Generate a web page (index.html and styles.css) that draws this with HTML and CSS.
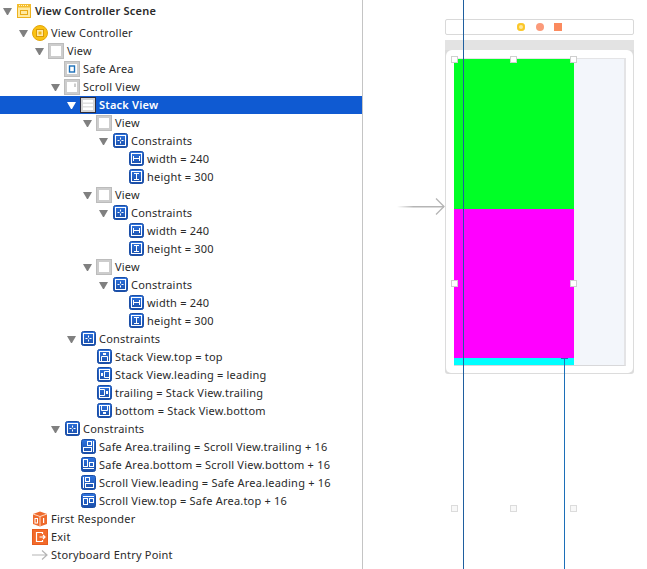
FILE: index.html
```html
<!DOCTYPE html>
<html lang="en">

<head>
    <meta charset="UTF-8" />
    <title>Main.storyboard</title>
    <link rel="stylesheet" href="styles.css">
</head>

<body>
    <svg class="defs" width="0" height="0">
        <defs>
            <linearGradient id="blue" x1="0" y1="0" x2="0" y2="1">
                <stop offset="0" stop-color="#2f74e0" />
                <stop offset="1" stop-color="#1a4ea8" />
            </linearGradient>
            <symbol id="i-scene" viewBox="0 0 16 16">
                <rect x="1.500" y="1.500" width="13" height="13" fill="#ffe9a0" stroke="#eeb21c" />
                <rect x="1" y="1" width="14" height="3.500" fill="#f4bd2e" />
                <path d="M3 2.500h10" stroke="#fff3c8" stroke-dasharray="1 1" />
                <rect x="4.500" y="7.500" width="7" height="4" fill="none" stroke="#e8a915" />
            </symbol>
            <symbol id="i-vc" viewBox="0 0 16 16">
                <circle cx="8" cy="8" r="7.500" fill="#fac213" stroke="#e2a50c" />
                <rect x="4.500" y="4.500" width="7" height="7" fill="#ffe9a8" stroke="#d99a08" />
                <rect x="6.500" y="6.500" width="3" height="3" fill="#f5b90f" />
            </symbol>
            <symbol id="i-view" viewBox="0 0 16 16">
                <rect x=".5" y=".5" width="15" height="15" fill="#cdcdcd" stroke="#bcbcbc" />
                <rect x="3" y="3" width="10" height="10" fill="#fff" />
            </symbol>
            <symbol id="i-safe" viewBox="0 0 16 16">
                <rect x=".5" y=".5" width="15" height="15" fill="#cdcdcd" stroke="#bcbcbc" />
                <rect x="3" y="3" width="10" height="10" fill="#fff" />
                <rect x="5.500" y="5" width="5" height="6" fill="#fff" stroke="#1c6fb8" stroke-width="1.400" />
            </symbol>
            <symbol id="i-scroll" viewBox="0 0 16 16">
                <rect x=".5" y=".5" width="15" height="15" fill="#cdcdcd" stroke="#bcbcbc" />
                <rect x="3" y="3" width="10" height="10" fill="#fff" />
                <rect x="10.500" y="4.500" width="1" height="3.500" fill="#9a9a9a" />
            </symbol>
            <symbol id="i-stack" viewBox="0 0 16 16">
                <rect x=".5" y=".5" width="15" height="15" fill="#d4d4d4" stroke="#2c2c3c" />
                <rect x="3" y="3" width="10" height="2.600" fill="#fff" />
                <rect x="3" y="6.700" width="10" height="2.600" fill="#fff" />
                <rect x="3" y="10.400" width="10" height="2.600" fill="#fff" />
            </symbol>

            <!-- blue constraint icons: 15px tile, pushed 1px right by the viewBox -->
            <symbol id="i-group" viewBox="-1 0 16 16">
                <rect x=".5" y=".5" width="14" height="14" rx="2" fill="url(#blue)" stroke="#1b4ea6" />
                <rect x="2.500" y="2.500" width="10" height="10" fill="none" stroke="#fff" />
                <path d="M7.500 4.500v2M7.500 8.500v2M4.500 7.500h2M8.500 7.500h2" stroke="#fff" />
            </symbol>
            <symbol id="i-width" viewBox="-1 0 16 16">
                <rect x=".5" y=".5" width="14" height="14" rx="2" fill="url(#blue)" stroke="#1b4ea6" />
                <rect x="2.500" y="2.500" width="10" height="10" fill="none" stroke="#fff" />
                <path d="M4.500 5v5M10.500 5v5M4.500 7.500h6" stroke="#fff" />
            </symbol>
            <symbol id="i-height" viewBox="-1 0 16 16">
                <rect x=".5" y=".5" width="14" height="14" rx="2" fill="url(#blue)" stroke="#1b4ea6" />
                <rect x="2.500" y="2.500" width="10" height="10" fill="none" stroke="#fff" />
                <path d="M5 4.500h5M5 10.500h5M7.500 4.500v6" stroke="#fff" />
            </symbol>
            <symbol id="i-top" viewBox="-1 0 16 16">
                <rect x=".5" y=".5" width="14" height="14" rx="2" fill="url(#blue)" stroke="#1b4ea6" />
                <rect x="2.500" y="2.500" width="10" height="10" fill="none" stroke="#fff" />
                <rect x="6" y="4" width="3" height="2" fill="#fff" />
                <path d="M4.500 12V7.500h6V12" fill="none" stroke="#fff" />
            </symbol>
            <symbol id="i-leading" viewBox="-1 0 16 16">
                <rect x=".5" y=".5" width="14" height="14" rx="2" fill="url(#blue)" stroke="#1b4ea6" />
                <rect x="2.500" y="2.500" width="10" height="10" fill="none" stroke="#fff" />
                <rect x="4" y="6" width="2" height="3" fill="#fff" />
                <path d="M12 4.500H7.500v6H12" fill="none" stroke="#fff" />
            </symbol>
            <symbol id="i-trailing" viewBox="-1 0 16 16">
                <rect x=".5" y=".5" width="14" height="14" rx="2" fill="url(#blue)" stroke="#1b4ea6" />
                <rect x="2.500" y="2.500" width="10" height="10" fill="none" stroke="#fff" />
                <rect x="9" y="6" width="2" height="3" fill="#fff" />
                <path d="M3 4.500h4.500v6H3" fill="none" stroke="#fff" />
            </symbol>
            <symbol id="i-bottom" viewBox="-1 0 16 16">
                <rect x=".5" y=".5" width="14" height="14" rx="2" fill="url(#blue)" stroke="#1b4ea6" />
                <rect x="2.500" y="2.500" width="10" height="10" fill="none" stroke="#fff" />
                <rect x="6" y="9" width="3" height="2" fill="#fff" />
                <path d="M4.500 3v4.500h6V3" fill="none" stroke="#fff" />
            </symbol>
            <symbol id="i-safe-trailing" viewBox="-1 0 16 16">
                <rect x=".5" y=".5" width="14" height="14" rx="2" fill="url(#blue)" stroke="#1b4ea6" />
                <path d="M12.500 2v11" stroke="#fff" />
                <rect x="6.500" y="2.500" width="4" height="4" fill="none" stroke="#fff" />
                <rect x="2.500" y="8.500" width="8" height="4" fill="none" stroke="#fff" />
            </symbol>
            <symbol id="i-safe-bottom" viewBox="-1 0 16 16">
                <rect x=".5" y=".5" width="14" height="14" rx="2" fill="url(#blue)" stroke="#1b4ea6" />
                <rect x="2.500" y="2.500" width="4" height="7" fill="none" stroke="#fff" />
                <rect x="8.500" y="5.500" width="4" height="4" fill="none" stroke="#fff" />
                <path d="M2 11.500h11" stroke="#fff" />
            </symbol>
            <symbol id="i-scroll-leading" viewBox="-1 0 16 16">
                <rect x=".5" y=".5" width="14" height="14" rx="2" fill="url(#blue)" stroke="#1b4ea6" />
                <path d="M2.500 2v11" stroke="#fff" />
                <rect x="4.500" y="2.500" width="4" height="4" fill="none" stroke="#fff" />
                <rect x="4.500" y="8.500" width="8" height="4" fill="none" stroke="#fff" />
            </symbol>
            <symbol id="i-scroll-top" viewBox="-1 0 16 16">
                <rect x=".5" y=".5" width="14" height="14" rx="2" fill="url(#blue)" stroke="#1b4ea6" />
                <path d="M2 3.500h11" stroke="#fff" />
                <rect x="2.500" y="5.500" width="4" height="6" fill="none" stroke="#fff" />
                <rect x="8.500" y="5.500" width="4" height="4" fill="none" stroke="#fff" />
            </symbol>

            <symbol id="i-responder" viewBox="0 0 16 16">
                <path d="M8 .5l7 2.500v10l-7 2.500-7-2.500V3z" fill="#ee6a2c" />
                <path d="M1 3l7 2.500L15 3M8 5.500v10" fill="none" stroke="#ffd9c2" />
                <rect x="3" y="7.500" width="2.500" height="4.500" fill="none" stroke="#fff" />
                <rect x="11" y="7" width="1.200" height="5" fill="#fff" />
            </symbol>
            <symbol id="i-exit" viewBox="0 0 16 16">
                <rect x=".5" y=".5" width="15" height="15" fill="#f26a2a" stroke="#e65c1e" />
                <path d="M10.500 5V3.500h-6v9h6V11M7.500 8h5.500M11 6l2 2-2 2" fill="none" stroke="#fff" stroke-width="1.200" />
            </symbol>
            <symbol id="i-entry" viewBox="0 0 16 16">
                <path d="M0 8h15M10 3.500l5 4.500-5 4.500" fill="none" stroke="#b5b5b5" stroke-width="1.200" />
            </symbol>
        </defs>
    </svg>

    <div class="editor">
        <ul class="tree">
            <li class="row scene d0"><i class="tri"></i><svg class="ico"><use href="#i-scene" /></svg><b>View Controller Scene</b></li>
            <li class="row d1 gap"><i class="tri"></i><svg class="ico"><use href="#i-vc" /></svg>View Controller</li>
            <li class="row d2"><i class="tri"></i><svg class="ico"><use href="#i-view" /></svg>View</li>
            <li class="row d3"><i class="tri none"></i><svg class="ico"><use href="#i-safe" /></svg>Safe Area</li>
            <li class="row d3"><i class="tri"></i><svg class="ico"><use href="#i-scroll" /></svg>Scroll View</li>
            <li class="row d4 selected"><i class="tri"></i><svg class="ico"><use href="#i-stack" /></svg><b>Stack View</b></li>
            <li class="row d5"><i class="tri"></i><svg class="ico"><use href="#i-view" /></svg>View</li>
            <li class="row d6"><i class="tri"></i><svg class="ico"><use href="#i-group" /></svg>Constraints</li>
            <li class="row d7"><i class="tri none"></i><svg class="ico"><use href="#i-width" /></svg>width = 240</li>
            <li class="row d7"><i class="tri none"></i><svg class="ico"><use href="#i-height" /></svg>height = 300</li>
            <li class="row d5"><i class="tri"></i><svg class="ico"><use href="#i-view" /></svg>View</li>
            <li class="row d6"><i class="tri"></i><svg class="ico"><use href="#i-group" /></svg>Constraints</li>
            <li class="row d7"><i class="tri none"></i><svg class="ico"><use href="#i-width" /></svg>width = 240</li>
            <li class="row d7"><i class="tri none"></i><svg class="ico"><use href="#i-height" /></svg>height = 300</li>
            <li class="row d5"><i class="tri"></i><svg class="ico"><use href="#i-view" /></svg>View</li>
            <li class="row d6"><i class="tri"></i><svg class="ico"><use href="#i-group" /></svg>Constraints</li>
            <li class="row d7"><i class="tri none"></i><svg class="ico"><use href="#i-width" /></svg>width = 240</li>
            <li class="row d7"><i class="tri none"></i><svg class="ico"><use href="#i-height" /></svg>height = 300</li>
            <li class="row d4"><i class="tri"></i><svg class="ico"><use href="#i-group" /></svg>Constraints</li>
            <li class="row d5"><i class="tri none"></i><svg class="ico"><use href="#i-top" /></svg>Stack View.top = top</li>
            <li class="row d5"><i class="tri none"></i><svg class="ico"><use href="#i-leading" /></svg>Stack View.leading = leading</li>
            <li class="row d5"><i class="tri none"></i><svg class="ico"><use href="#i-trailing" /></svg>trailing = Stack View.trailing</li>
            <li class="row d5"><i class="tri none"></i><svg class="ico"><use href="#i-bottom" /></svg>bottom = Stack View.bottom</li>
            <li class="row d3"><i class="tri"></i><svg class="ico"><use href="#i-group" /></svg>Constraints</li>
            <li class="row d4"><i class="tri none"></i><svg class="ico"><use href="#i-safe-trailing" /></svg>Safe Area.trailing = Scroll View.trailing + 16</li>
            <li class="row d4"><i class="tri none"></i><svg class="ico"><use href="#i-safe-bottom" /></svg>Safe Area.bottom = Scroll View.bottom + 16</li>
            <li class="row d4"><i class="tri none"></i><svg class="ico"><use href="#i-scroll-leading" /></svg>Scroll View.leading = Safe Area.leading + 16</li>
            <li class="row d4"><i class="tri none"></i><svg class="ico"><use href="#i-scroll-top" /></svg>Scroll View.top = Safe Area.top + 16</li>
            <li class="row d1"><i class="tri none"></i><svg class="ico"><use href="#i-responder" /></svg>First Responder</li>
            <li class="row d1"><i class="tri none"></i><svg class="ico"><use href="#i-exit" /></svg>Exit</li>
            <li class="row d1"><i class="tri none"></i><svg class="ico"><use href="#i-entry" /></svg>Storyboard Entry Point</li>
        </ul>

        <div class="canvas">
            <div class="dock">
                <span class="dock-ico vc"></span>
                <span class="dock-ico fr"></span>
                <span class="dock-ico ex"></span>
            </div>

            <svg class="entry-arrow" width="50" height="20" viewBox="0 0 50 20">
                <defs>
                    <linearGradient id="fade" x1="0" y1="0" x2="1" y2="0">
                        <stop offset="0" stop-color="#fff" />
                        <stop offset=".35" stop-color="#b5b5b5" />
                    </linearGradient>
                </defs>
                <rect x="0" y="9" width="47" height="1.500" fill="url(#fade)" />
                <path d="M39 1.500l8 8-8 8" fill="none" stroke="#b5b5b5" stroke-width="1.300" />
            </svg>

            <div class="device">
                <div class="device-top"></div>
                <div class="screen">
                    <div class="scroll">
                        <div class="stack">
                            <div class="green"></div>
                            <div class="magenta"></div>
                        </div>
                    </div>
                </div>
            </div>

            <span class="handle h-tl"></span>
            <span class="handle h-tm"></span>
            <span class="handle h-tr"></span>
            <span class="handle h-ml"></span>
            <span class="handle h-mr"></span>
            <span class="handle ghost h-bl"></span>
            <span class="handle ghost h-bm"></span>
            <span class="handle ghost h-br"></span>

            <div class="guide left"></div>
            <div class="guide right"></div>
        </div>
    </div>
</body>

</html>
```

FILE: styles.css
```css
* {
    box-sizing: border-box;
}

html,
body {
    margin: 0;
    height: 100%;
    overflow: hidden;
    background: #fff;
}

body {
    font-family: "Noto Sans", sans-serif;
    font-size: 11px;
    letter-spacing: .21px;
    color: #2a2a2a;
}

.defs {
    position: absolute;
}

.editor {
    display: flex;
    width: 647px;
    height: 569px;
}

/* outline */
.tree {
    width: 363px;
    height: 100%;
    margin: 0;
    padding: 2px 0 0;
    list-style: none;
    border-right: 1px solid #c4c4c4;
    flex-shrink: 0;
}

.row {
    display: flex;
    align-items: center;
    height: 18px;
    padding-bottom: 2px;
    white-space: nowrap;
}

.row b {
    font-weight: 600;
}

.gap {
    margin-top: 4px;
}

.d0 { padding-left: 3px; }
.d1 { padding-left: 19px; }
.d2 { padding-left: 35px; }
.d3 { padding-left: 51px; }
.d4 { padding-left: 67px; }
.d5 { padding-left: 83px; }
.d6 { padding-left: 99px; }
.d7 { padding-left: 115px; }

.tri {
    width: 9px;
    height: 0;
    margin: 0 4px -2px 0;
    flex-shrink: 0;
    border-top: 7px solid #808080;
    border-left: 4.5px solid transparent;
    border-right: 4.5px solid transparent;
}

.tri.none {
    border-color: transparent;
}

.ico {
    width: 16px;
    height: 16px;
    margin: 0 3px -2px 0;
    flex-shrink: 0;
}

.selected {
    background: #0f5ad2;
    color: #fff;
}

.selected .tri {
    border-top-color: #fff;
}

/* canvas */
.canvas {
    position: relative;
    flex: 1;
    height: 100%;
}

.dock {
    position: absolute;
    left: 82px;
    top: 19px;
    width: 189px;
    height: 16px;
    border: 1px solid #d9d9d9;
    border-radius: 2px;
}

.dock-ico {
    position: absolute;
    top: 3px;
    width: 8px;
    height: 8px;
}

.vc {
    left: 71px;
    border-radius: 50%;
    background: #fbc72a;
    box-shadow: inset 0 0 0 2px #fbc72a, inset 0 0 0 4px #ffe89c;
}

.fr {
    left: 90px;
    border-radius: 50%;
    background: #fb9a7a;
}

.ex {
    left: 108px;
    background: #fb8a5e;
}

.entry-arrow {
    position: absolute;
    left: 34px;
    top: 197px;
}

.device {
    position: absolute;
    left: 82px;
    top: 40px;
    width: 189px;
    height: 334px;
    background: #dcdcdc;
    border-radius: 0 0 3px 3px;
    padding: 0 1px 1px;
}

.device-top {
    height: 10px;
    margin: 0 -1px;
    background: #e3e3e3;
}

.screen {
    height: 323px;
    padding: 8px 8px 7px 8px;
    background: #fff;
    border-radius: 6px 6px 5px 5px;
}

.scroll {
    width: 172px;
    height: 308px;
    background: #f3f6fb;
    border-top: 1px solid #e4e4e6;
    border-right: 2px solid #e4e4e6;
    border-bottom: 1px solid #d8d8da;
}

.stack {
    width: 120px;
    height: 306px;
    background: #00ffff;
}

.green {
    height: 150px;
    background: #00ff26;
}

.magenta {
    height: 149px;
    background: #ff00ff;
}

.handle {
    position: absolute;
    width: 7px;
    height: 7px;
    background: #fff;
    border: 1px solid #cfcfcf;
}

.ghost {
    background: #f8f8f8;
    border-color: #dcdcdc;
}

.h-tl { left: 88px; top: 56px; }
.h-tm { left: 147px; top: 56px; }
.h-tr { left: 207px; top: 56px; }
.h-ml { left: 88px; top: 280px; }
.h-mr { left: 207px; top: 280px; }
.h-bl { left: 88px; top: 505px; }
.h-bm { left: 147px; top: 505px; }
.h-br { left: 207px; top: 505px; }

.guide {
    position: absolute;
    width: 1px;
    bottom: 0;
}

.guide.left {
    left: 100px;
    top: 0;
    background: #1f5f9f;
}

.guide.right {
    left: 201px;
    top: 358px;
    background: #1c6fb8;
}

.guide.right::before {
    content: "";
    position: absolute;
    left: -3px;
    top: 0;
    width: 7px;
    height: 1px;
    background: #1c6fb8;
}
```
